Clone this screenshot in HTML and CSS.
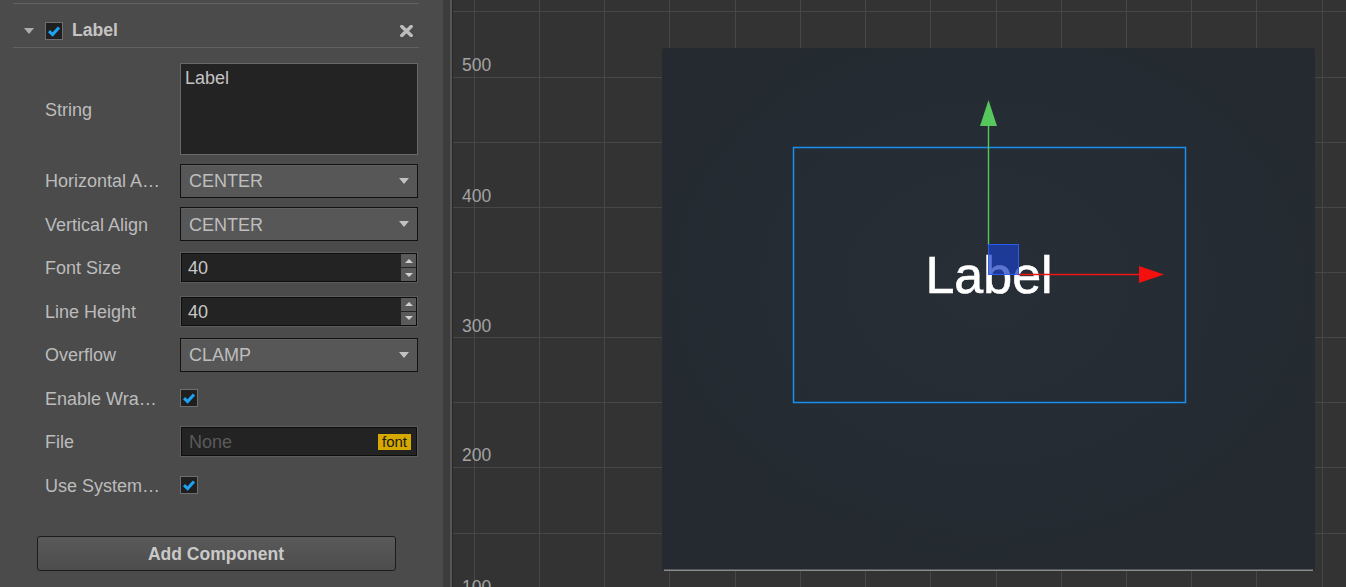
FILE: index.html
```html
<!DOCTYPE html>
<html lang="en">
<head>
<meta charset="utf-8">
<title>Label Inspector</title>
<link rel="stylesheet" href="styles.css">
</head>
<body>
<div class="app">
  <aside class="inspector">
    <div class="prev-sep"></div>
    <div class="comp-header">
      <span class="fold"></span>
      <span class="check"><svg viewBox="0 0 18 18" width="18" height="18"><path d="M4 9.2 L7.6 12.6 L14 5.4" fill="none" stroke="#1ea2f2" stroke-width="3"/></svg></span>
      <span class="comp-title">Label</span>
      <span class="remove"><svg viewBox="0 0 13 12" width="13" height="12"><path d="M1.8 1.5 L11.2 10.5 M11.2 1.5 L1.8 10.5" stroke="#bdbdbd" stroke-width="3.4" stroke-linecap="round"/></svg></span>
    </div>

    <div class="prop-row row-string">
      <div class="prop-label">String</div>
      <div class="textarea">Label</div>
    </div>
    <div class="prop-row">
      <div class="prop-label" title="Horizontal Align">Horizontal A…</div>
      <div class="select"><span class="sel-val">CENTER</span><span class="caret"></span></div>
    </div>
    <div class="prop-row">
      <div class="prop-label">Vertical Align</div>
      <div class="select"><span class="sel-val">CENTER</span><span class="caret"></span></div>
    </div>
    <div class="prop-row">
      <div class="prop-label">Font Size</div>
      <div class="num"><div class="num-inner"><span class="num-val">40</span><span class="spin"><span class="spin-btn"><span class="up"></span></span><span class="spin-btn"><span class="down"></span></span></span></div></div>
    </div>
    <div class="prop-row">
      <div class="prop-label">Line Height</div>
      <div class="num"><div class="num-inner"><span class="num-val">40</span><span class="spin"><span class="spin-btn"><span class="up"></span></span><span class="spin-btn"><span class="down"></span></span></span></div></div>
    </div>
    <div class="prop-row">
      <div class="prop-label">Overflow</div>
      <div class="select"><span class="sel-val">CLAMP</span><span class="caret"></span></div>
    </div>
    <div class="prop-row">
      <div class="prop-label" title="Enable Wrap Text">Enable Wra…</div>
      <span class="check"><svg viewBox="0 0 18 18" width="18" height="18"><path d="M4 9.2 L7.6 12.6 L14 5.4" fill="none" stroke="#1ea2f2" stroke-width="3"/></svg></span>
    </div>
    <div class="prop-row">
      <div class="prop-label">File</div>
      <div class="num"><div class="num-inner file-inner"><span class="none">None</span><span class="badge">font</span></div></div>
    </div>
    <div class="prop-row">
      <div class="prop-label" title="Use System Font">Use System…</div>
      <span class="check"><svg viewBox="0 0 18 18" width="18" height="18"><path d="M4 9.2 L7.6 12.6 L14 5.4" fill="none" stroke="#1ea2f2" stroke-width="3"/></svg></span>
    </div>

    <div class="btn-wrap"><button class="add-btn">Add Component</button></div>
  </aside>
  <div class="gutter"></div>
  <div class="gutter-line"></div>
  <div class="gutter-dark"></div>
  <main class="scene">
    <svg class="scene-svg" viewBox="453 0 893 587" width="893" height="587">
      <defs>
        <radialGradient id="bg" cx="50%" cy="45%" r="60%">
          <stop offset="0%" stop-color="#272e36"/>
          <stop offset="100%" stop-color="#242a30"/>
        </radialGradient>
      </defs>
      <g stroke="#474747" stroke-width="1">
        <line x1="474.5" y1="0" x2="474.5" y2="587"/>
        <line x1="539.5" y1="0" x2="539.5" y2="587"/>
        <line x1="604.5" y1="0" x2="604.5" y2="587"/>
        <line x1="669.5" y1="0" x2="669.5" y2="587"/>
        <line x1="735.5" y1="0" x2="735.5" y2="587"/>
        <line x1="800.5" y1="0" x2="800.5" y2="587"/>
        <line x1="865.5" y1="0" x2="865.5" y2="587"/>
        <line x1="930.5" y1="0" x2="930.5" y2="587"/>
        <line x1="996.5" y1="0" x2="996.5" y2="587"/>
        <line x1="1061.5" y1="0" x2="1061.5" y2="587"/>
        <line x1="1126.5" y1="0" x2="1126.5" y2="587"/>
        <line x1="1191.5" y1="0" x2="1191.5" y2="587"/>
        <line x1="1256.5" y1="0" x2="1256.5" y2="587"/>
        <line x1="1322.5" y1="0" x2="1322.5" y2="587"/>
        <line x1="453" y1="11.5" x2="1346" y2="11.5"/>
        <line x1="453" y1="77.5" x2="1346" y2="77.5"/>
        <line x1="453" y1="142.5" x2="1346" y2="142.5"/>
        <line x1="453" y1="207.5" x2="1346" y2="207.5"/>
        <line x1="453" y1="272.5" x2="1346" y2="272.5"/>
        <line x1="453" y1="337.5" x2="1346" y2="337.5"/>
        <line x1="453" y1="402.5" x2="1346" y2="402.5"/>
        <line x1="453" y1="467.5" x2="1346" y2="467.5"/>
        <line x1="453" y1="533.5" x2="1346" y2="533.5"/>
      </g>
      <g class="axis-num">
        <text x="462" y="71">500</text>
        <text x="462" y="202">400</text>
        <text x="462" y="332">300</text>
        <text x="462" y="461">200</text>
        <text x="462" y="593">100</text>
      </g>
      <rect x="662" y="48" width="653" height="523" rx="3" fill="url(#bg)"/>
      <line x1="664" y1="570.2" x2="1313" y2="570.2" stroke="#8a8a8a" stroke-width="1.6"/>
      <rect x="793.5" y="147.5" width="392" height="255" fill="none" stroke="#1a8ff0" stroke-width="1.5"/>
      <text class="label-text" x="989" y="293">Label</text>
      <line x1="988.5" y1="124" x2="988.5" y2="245" stroke="#55c75c" stroke-width="1.4"/>
      <polygon points="988.5,100 980,126 997,126" fill="#55c75c"/>
      <line x1="1018" y1="274.5" x2="1141" y2="274.5" stroke="#f01515" stroke-width="1.4"/>
      <polygon points="1164,274.5 1139,266 1139,283" fill="#f51010"/>
      <rect x="988.5" y="244.5" width="30" height="30" fill="rgba(28,64,190,0.72)" stroke="#2a5cf0" stroke-width="1"/>
    </svg>
  </main>
</div>
</body>
</html>
```

FILE: styles.css
```css
* { box-sizing: border-box; }
html, body { margin: 0; padding: 0; }
body {
  width: 1346px;
  height: 587px;
  overflow: hidden;
  background: #333333;
  font-family: "Liberation Sans", Arial, sans-serif;
}
.app {
  display: flex;
  height: 587px;
}
.inspector {
  width: 443px;
  flex: none;
  background: #4b4b4b;
  padding: 3px 24px 0 13px;
  color: #bdbdbd;
  font-size: 18px;
}
.prev-sep {
  height: 1px;
  background: #616161;
}
.comp-header {
  display: flex;
  align-items: center;
  height: 44px;
  padding: 10px 6px 0 11px;
  border-bottom: 1px solid #616161;
}
.fold {
  width: 0;
  height: 0;
  border-left: 5px solid transparent;
  border-right: 5px solid transparent;
  border-top: 6px solid #adadad;
  margin-right: 11px;
}
.check {
  width: 18px;
  height: 18px;
  flex: none;
  border: 1px solid #6e6e6e;
  background: #1f1f1f;
  display: flex;
  align-items: center;
  justify-content: center;
}
.check svg { display: block; margin: -1px; }
.comp-title {
  margin-left: 9px;
  font-weight: bold;
  color: #c4c4c4;
  font-size: 17.6px;
}
.remove {
  margin-left: auto;
  display: flex;
}
.prop-row {
  display: flex;
  align-items: center;
  height: 43.5px;
  padding-left: 32px;
}
.prop-row.row-string {
  height: 92px;
  margin-top: 15px;
  margin-bottom: 4px;
}
.prop-label {
  width: 135px;
  flex: none;
  white-space: nowrap;
  overflow: hidden;
  color: #bcbcbc;
  padding-top: 2px;
}
.textarea {
  width: 238px;
  height: 92px;
  background: #232323;
  border: 1px solid #686868;
  padding: 4px 4px;
  color: #c4c4c4;
  line-height: 20px;
}
.select {
  width: 238px;
  height: 34px;
  background: #575757;
  border: 1px solid #121212;
  box-shadow: inset 0 1px 0 #5f5f5f;
  display: flex;
  align-items: center;
  justify-content: space-between;
  padding: 0 8px 0 8px;
  color: #bebebe;
}
.sel-val { padding-top: 2px; }
.caret {
  width: 0;
  height: 0;
  border-left: 5.5px solid transparent;
  border-right: 5.5px solid transparent;
  border-top: 6px solid #c2c2c2;
}
.num {
  width: 238px;
  height: 31px;
  border: 1px solid #5c5c5c;
}
.num-inner {
  height: 100%;
  background: #232323;
  border: 1px solid #0e0e0e;
  display: flex;
  align-items: center;
  padding-left: 6px;
}
.num-val {
  flex: 1;
  color: #c8c8c8;
  padding-top: 2px;
}
.spin {
  display: flex;
  flex-direction: column;
  gap: 1px;
  width: 15px;
  height: 27px;
  margin-right: 0;
}
.spin-btn {
  flex: 1;
  background: #5a5a5a;
  display: flex;
  align-items: center;
  justify-content: center;
}
.up {
  width: 0; height: 0;
  border-left: 4px solid transparent;
  border-right: 4px solid transparent;
  border-bottom: 4px solid #cfcfcf;
}
.down {
  width: 0; height: 0;
  border-left: 4px solid transparent;
  border-right: 4px solid transparent;
  border-top: 4px solid #cfcfcf;
}
.file-inner {
  padding-left: 7px;
  padding-right: 5px;
}
.none {
  flex: 1;
  color: #5a5a5a;
  padding-top: 2px;
}
.badge {
  background: #d6a900;
  color: #1a1a1a;
  font-size: 15px;
  line-height: 16px;
  padding: 0 4px;
  height: 16px;
}
.btn-wrap {
  display: flex;
  justify-content: center;
  margin-top: 29px;
}
.add-btn {
  width: 359px;
  height: 35px;
  border: 1px solid #1c1c1c;
  border-radius: 3px;
  background: linear-gradient(#5a5a5a, #4c4c4c);
  color: #c9c9c9;
  font-family: "Liberation Sans", Arial, sans-serif;
  font-weight: bold;
  font-size: 17.5px;
  padding: 2px 0 0;
}
.gutter {
  width: 7px;
  flex: none;
  background: #3c3c3c;
}
.gutter-line {
  width: 2px;
  flex: none;
  background: #575757;
}
.gutter-dark {
  width: 1px;
  flex: none;
  background: #262626;
}
.scene {
  flex: 1;
  overflow: hidden;
  background: #333333;
}
.scene-svg { display: block; }
.axis-num text {
  font-family: "Liberation Sans", Arial, sans-serif;
  font-size: 17.5px;
  fill: #a3a3a3;
}
.label-text {
  font-family: "Liberation Sans", Arial, sans-serif;
  font-size: 52px;
  fill: #ffffff;
  stroke: #ffffff;
  stroke-width: 0.6px;
  text-anchor: middle;
}
```
